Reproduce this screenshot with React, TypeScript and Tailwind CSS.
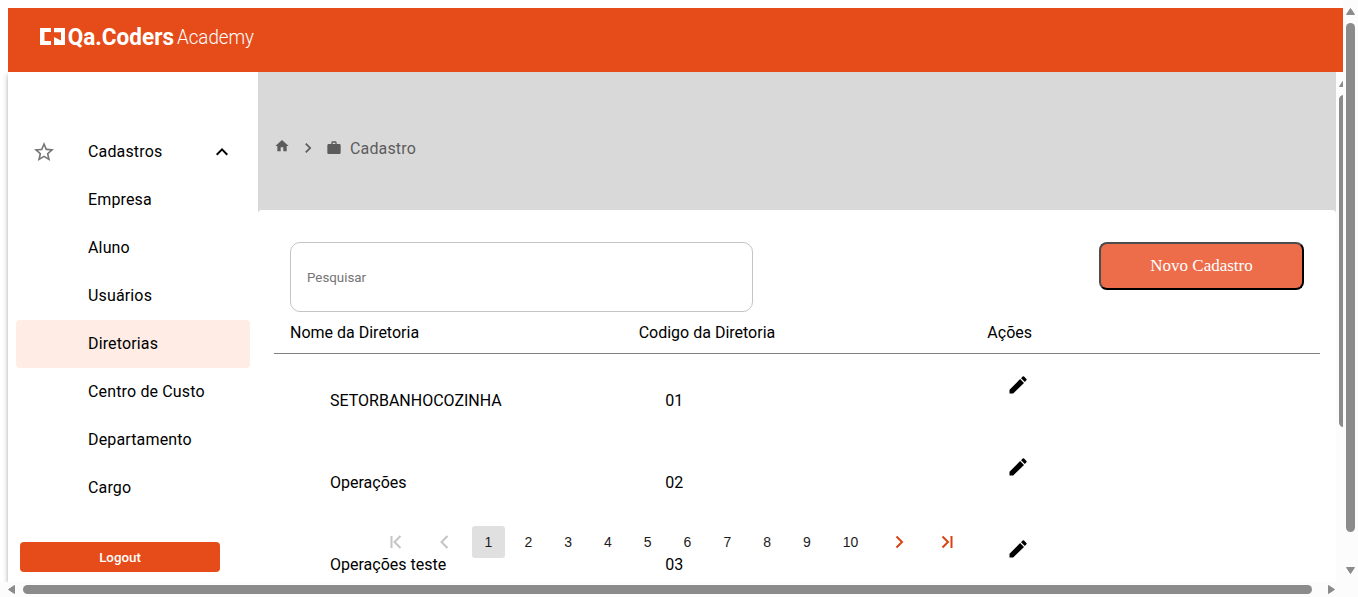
import React from 'react';

const menuItems = ['Empresa', 'Aluno', 'Usuários', 'Diretorias', 'Centro de Custo', 'Departamento', 'Cargo'];

const rows = [
  { name: 'SETORBANHOCOZINHA', code: '01' },
  { name: 'Operações', code: '02' },
  { name: 'Operações teste', code: '03' },
];

const pages = [1, 2, 3, 4, 5, 6, 7, 8, 9, 10];

function Icon({ d, className }: { d: string; className: string }) {
  return (
    <svg viewBox="0 0 24 24" fill="currentColor" className={`shrink-0 ${className}`}>
      <path d={d} />
    </svg>
  );
}

const STAR =
  'M22 9.24l-7.19-.62L12 2 9.19 8.63 2 9.24l5.46 4.73L5.82 21 12 17.27 18.18 21l-1.63-7.03L22 9.24zM12 15.4l-3.76 2.27 1-4.28-3.32-2.88 4.38-.38L12 6.1l1.71 4.04 4.38.38-3.32 2.88 1 4.28L12 15.4z';
const EXPAND_LESS = 'M12 8l-6 6 1.41 1.41L12 10.83l4.59 4.58L18 14z';
const HOME = 'M10 20v-6h4v6h5v-8h3L12 3 2 12h3v8z';
const NEXT = 'M10 6L8.59 7.41 13.17 12l-4.58 4.59L10 18l6-6z';
const WORK =
  'M20 6h-4V4c0-1.11-.89-2-2-2h-4c-1.11 0-2 .89-2 2v2H4c-1.11 0-1.99.89-1.99 2L2 19c0 1.11.89 2 2 2h16c1.11 0 2-.89 2-2V8c0-1.11-.89-2-2-2zm-6 0h-4V4h4v2z';
const EDIT =
  'M3.500 16.800V20.500h3.700L18 9.900l-3.900-3.900L3.500 16.800zM20.400 7.300c.39-.39.39-1.02 0-1.410l-2.340-2.340a.9959.9959 0 0 0-1.410 0l-1.600 1.600 3.750 3.750 1.600-1.600z';

function Logo() {
  return (
    <svg width="220" height="32" viewBox="0 0 220 32" fill="#fff" aria-label="Qa.Coders Academy">
      <path d="M0 8h11v4H4.500v9H11v4H0z" />
      <path d="M14 8h11v17H14v-8l7 3.500V12.300h-7z" />
      <text x="27.700" y="24.500" fontFamily="Roboto, sans-serif" fontSize="23" fontWeight="700" textLength="106.300" lengthAdjust="spacingAndGlyphs">
        Qa.Coders
      </text>
      <text x="137" y="23.700" fontFamily="Roboto, sans-serif" fontSize="20" fontWeight="300" textLength="77" lengthAdjust="spacingAndGlyphs">
        Academy
      </text>
    </svg>
  );
}

function Sidebar() {
  return (
    <aside className="flex w-[250px] shrink-0 flex-col bg-white px-2 pt-14 tracking-[0.15px] shadow-[0_3px_5px_rgba(0,0,0,0.35)]">
      <div className="flex h-12 items-center pl-4">
        <Icon d={STAR} className="size-6 text-[#757575]" />
        <span className="ml-8 w-[122px]">Cadastros</span>
        <Icon d={EXPAND_LESS} className="size-6" />
      </div>
      {menuItems.map((item) => (
        <div
          key={item}
          className={`flex h-12 shrink-0 items-center rounded pl-[72px] ${item === 'Diretorias' ? 'bg-[#feece5]' : ''}`}
        >
          {item}
        </div>
      ))}
      <button className="mt-[30px] ml-1 h-[30px] w-[200px] shrink-0 rounded bg-[#e64c1a] pt-[2px] text-[13.333px] font-medium tracking-normal text-white">
        Logout
      </button>
    </aside>
  );
}

function Pager() {
  return (
    <nav className="absolute top-[316px] left-[114px] flex h-8 items-center font-['Liberation_Sans',sans-serif] text-[14px] text-[#1c1c1c]">
      <span className="flex w-12 justify-center text-[#c4c4c4]">
        <svg width="14" height="16" viewBox="0 0 14 16" fill="none" stroke="currentColor" strokeWidth="2">
          <path d="M2.500 2v12M11.500 2L5.500 8l6 6" />
        </svg>
      </span>
      <span className="mr-[0.6px] flex w-12 justify-center text-[#c4c4c4]">
        <svg width="14" height="16" viewBox="0 0 14 16" fill="none" stroke="currentColor" strokeWidth="2">
          <path d="M10.500 2L4.500 8l6 6" />
        </svg>
      </span>
      {pages.map((page) => (
        <span key={page} className="relative flex h-8 items-center px-4">
          {page === 1 && <span className="absolute inset-y-0 right-[3.800px] left-[3.800px] rounded-[3px] bg-[#e0e0e0]" />}
          <span className="relative">{page}</span>
        </span>
      ))}
      <span className="ml-px flex w-12 justify-center text-[#d84315]">
        <svg width="14" height="16" viewBox="0 0 14 16" fill="none" stroke="currentColor" strokeWidth="2">
          <path d="M4.500 2.500L10 8l-5.500 5.500" />
        </svg>
      </span>
      <span className="flex w-12 justify-center text-[#d84315]">
        <svg width="14" height="16" viewBox="0 0 14 16" fill="none" stroke="currentColor" strokeWidth="2">
          <path d="M2.500 2.500L8 8l-5.500 5.500M11.500 2v12" />
        </svg>
      </span>
    </nav>
  );
}

function Content() {
  return (
    <main className="flex w-[1078px] shrink-0 flex-col bg-[#d9d9d9]">
      <div className="flex h-[138px] shrink-0 items-start pt-[66px] pl-4 text-[#5c5c5c]">
        <Icon d={HOME} className="size-4" />
        <Icon d={NEXT} className="ml-2 size-5" />
        <Icon d={WORK} className="mt-[2px] ml-2 size-4" />
        <span className="-mt-px ml-2 leading-6 tracking-[0.15px]">Cadastro</span>
      </div>
      <section className="relative h-[372px] rounded-t bg-white px-4 pt-8">
        <div className="flex h-[70px] items-start justify-between px-4">
          <input
            placeholder="Pesquisar"
            className="h-[70px] w-[463px] rounded-[10px] border border-[#c4c4c4] px-4 text-[13.333px] placeholder:text-[#757575]"
          />
          <button className="h-12 w-[205px] rounded-lg border-2 border-t-[#4c4c4c] border-r-black border-b-black border-l-[#4c4c4c] bg-[#ed6d4b] font-['Liberation_Serif',serif] text-[17px] text-white">
            Novo Cadastro
          </button>
        </div>
        <div className="grid h-[42px] grid-cols-3 items-center border-b border-[#808080]">
          <span className="pl-4">Nome da Diretoria</span>
          <span className="pl-4">Codigo da Diretoria</span>
          <span className="pl-4">Ações</span>
        </div>
        {rows.map((row) => (
          <div key={row.code} className="grid h-[82px] grid-cols-3 items-start">
            <span className="pt-[35px] pl-14 leading-6">{row.name}</span>
            <span className="pt-[35px] pl-[42.500px] leading-6">{row.code}</span>
            <span className="pt-[19px] pl-[34.667px]">
              <Icon d={EDIT} className="size-6 text-black" />
            </span>
          </div>
        ))}
        <Pager />
      </section>
    </main>
  );
}

function Arrow({ d, className }: { d: string; className: string }) {
  return (
    <svg width="9" height="9" viewBox="0 0 9 9" fill="#8b8b8b" stroke="#8b8b8b" strokeLinejoin="round" className={`shrink-0 ${className}`}>
      <path d={d} />
    </svg>
  );
}

const UP = 'M4.500 1.500L8.500 7.500H.5z';
const DOWN = 'M4.500 7.500L8.500 1.500H.5z';
const LEFT = 'M1.500 4.500L7.500 .5V8.500z';
const RIGHT = 'M7.500 4.500L1.500 .5V8.500z';

export default function App() {
  return (
    <div className="flex h-[597px] w-[1358px] flex-col overflow-hidden bg-white font-[Roboto,sans-serif] text-[16px] leading-6 text-black">
      <div className="flex h-[582px]">
        <div className="flex w-[1343px] shrink-0 flex-col overflow-hidden pt-2 pl-2">
          <header className="relative z-10 flex h-16 shrink-0 items-start bg-[#e64c1a] pt-3 pl-8">
            <Logo />
          </header>
          <div className="flex h-[510px]">
            <Sidebar />
            <Content />
            <div className="flex w-[7px] flex-col overflow-hidden bg-[#fcfcfc] pt-[7px] pl-[3px]">
              <Arrow d={UP} className="" />
              <div className="mt-[7px] h-[332px] w-[9px] shrink-0 rounded-full bg-[#8b8b8b]" />
            </div>
          </div>
        </div>
        <div className="flex w-[15px] flex-col items-center bg-[#fcfcfc] pt-[7px]">
          <Arrow d={UP} className="" />
          <div className="mt-[7px] h-[509px] w-[9px] shrink-0 rounded-full bg-[#8b8b8b]" />
          <Arrow d={DOWN} className="mt-[34px]" />
        </div>
      </div>
      <div className="flex h-[15px] items-center bg-[#fcfcfc] pl-[7px]">
        <Arrow d={LEFT} className="" />
        <div className="ml-[7px] h-[9px] w-[1289px] shrink-0 rounded-full bg-[#8b8b8b]" />
        <Arrow d={RIGHT} className="ml-[15px]" />
      </div>
    </div>
  );
}
